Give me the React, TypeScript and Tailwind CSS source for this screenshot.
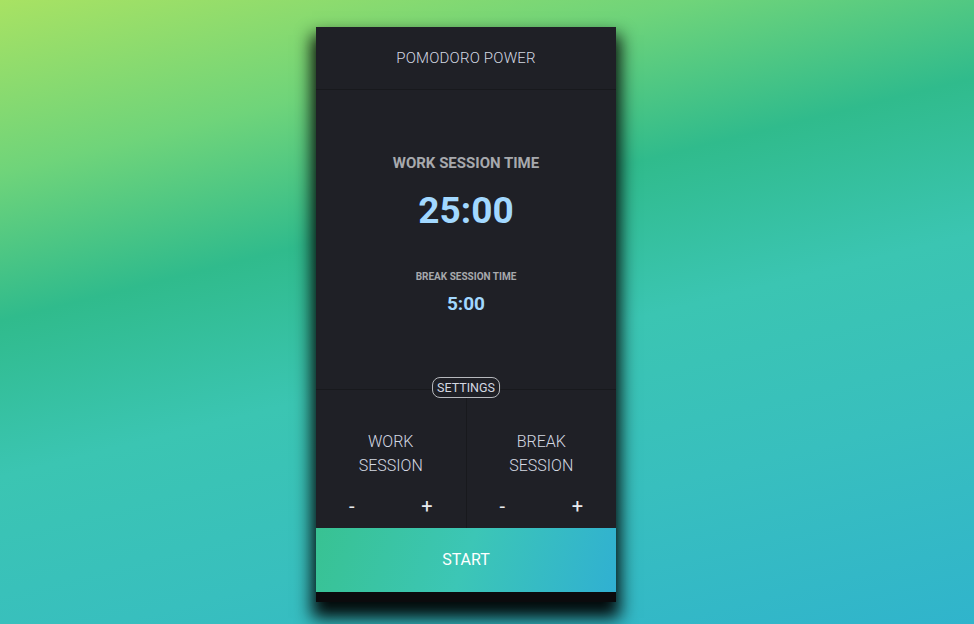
import React from "react";

export default function App() {
  return (
    <div
      className="w-[974px] h-[624px] flex pl-[316px] pt-[27px] bg-[linear-gradient(166deg,#a8e263_0%,#6fd47a_20%,#30bb8c_37%,#3bc5b2_55%,#38bfbe_75%,#30b4cc_100%)]"
      style={{ fontFamily: "Roboto, 'Liberation Sans', sans-serif" }}
    >
      <div className="w-[300px] h-[575px] flex flex-col bg-[#1f2026] shadow-[0_12px_16px_4px_rgba(0,0,0,0.95)]">
        <div className="h-[63px] flex items-center justify-center border-b border-[#18191d] text-[#d4d8e2] text-[15px] font-light tracking-[0.2px]">
          POMODORO POWER
        </div>
        <div className="h-[300px] flex flex-col items-center border-b border-[#18191d] relative">
          <div className="mt-[63px] text-[15px] font-bold text-[#a7a9ad] leading-[20px]">WORK SESSION TIME</div>
          <div className="mt-[16px] text-[37px] font-bold text-[#a2d8ff] leading-[44px]">25:00</div>
          <div className="mt-[38px] text-[10px] font-bold text-[#a7a9ad] leading-[12px]">BREAK SESSION TIME</div>
          <div className="mt-[9px] text-[19px] font-bold text-[#a2d8ff] leading-[24px]">5:00</div>
          <div className="absolute bottom-[-9px] left-1/2 -translate-x-1/2 h-[21px] px-[4px] rounded-[8px] border border-[#b6b8bd] bg-[#1f2026] text-[#d4d8e2] text-[12.5px] leading-[19px] font-normal z-10">
            SETTINGS
          </div>
        </div>
        <div className="h-[138px] flex">
          <div className="flex-1 flex flex-col items-center border-r border-[#18191d]">
            <div className="mt-[40px] text-[16px] font-light text-[#d4d8e2] leading-[24px] text-center">
              WORK<br />SESSION
            </div>
            <div className="mt-[16px] w-full flex justify-between px-[33px] text-[20px] text-[#e8eaee] leading-[24px]">
              <span>-</span>
              <span>+</span>
            </div>
          </div>
          <div className="flex-1 flex flex-col items-center">
            <div className="mt-[40px] text-[16px] font-light text-[#d4d8e2] leading-[24px] text-center">
              BREAK<br />SESSION
            </div>
            <div className="mt-[16px] w-full flex justify-between px-[33px] text-[20px] text-[#e8eaee] leading-[24px]">
              <span>-</span>
              <span>+</span>
            </div>
          </div>
        </div>
        <div className="h-[64px] flex items-center justify-center bg-[linear-gradient(110deg,#38c292_0%,#3cc6b6_50%,#30b0d2_100%)] text-white text-[16px]">
          START
        </div>
        <div className="h-[10px] bg-[#0b0b0d]" />
      </div>
    </div>
  );
}
